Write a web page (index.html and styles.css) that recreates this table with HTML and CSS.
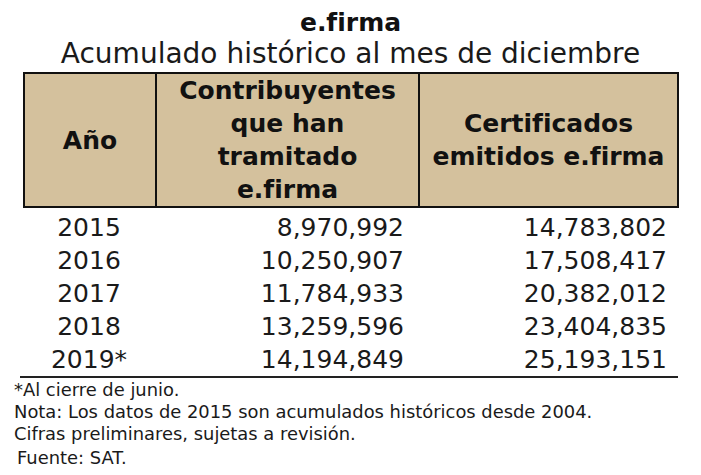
FILE: index.html
```html
<!DOCTYPE html>
<html lang="es">
<head>
<meta charset="utf-8">
<title>e.firma</title>
<link rel="stylesheet" href="styles.css">
</head>
<body>
  <h1 class="title">e.firma</h1>
  <p class="subtitle">Acumulado histórico al mes de diciembre</p>

  <div class="thead">
    <div class="th">Año</div>
    <div class="th">Contribuyentes<br>que han<br>tramitado<br>e.firma</div>
    <div class="th th-last">Certificados<br>emitidos e.firma</div>
  </div>

  <div class="tbody">
    <div class="td year">2015</div><div class="td num">8,970,992</div><div class="td num num-last">14,783,802</div>
    <div class="td year">2016</div><div class="td num">10,250,907</div><div class="td num num-last">17,508,417</div>
    <div class="td year">2017</div><div class="td num">11,784,933</div><div class="td num num-last">20,382,012</div>
    <div class="td year">2018</div><div class="td num">13,259,596</div><div class="td num num-last">23,404,835</div>
    <div class="td year">2019*</div><div class="td num">14,194,849</div><div class="td num num-last">25,193,151</div>
  </div>
  <div class="rule"></div>

  <div class="notes">
    <p class="note">*Al cierre de junio.</p>
    <p class="note">Nota: Los datos de 2015 son acumulados históricos desde 2004.</p>
    <p class="note">Cifras preliminares, sujetas a revisión.</p>
    <p class="note note-source">Fuente: SAT.</p>
  </div>
</body>
</html>
```

FILE: styles.css
```css
html, body {
  margin: 0;
  padding: 0;
  background: #ffffff;
}

body {
  width: 701px;
  height: 475px;
  overflow: hidden;
  font-family: "DejaVu Sans", "Open Sans", sans-serif;
  color: #111111;
}

.title {
  margin: 0;
  padding-top: 8px;
  font-size: 25px;
  line-height: 30px;
  font-weight: 700;
  text-align: center;
}

.subtitle {
  margin: 0;
  font-size: 28px;
  line-height: 32px;
  font-weight: 400;
  text-align: center;
  color: #1a1a1a;
}

.thead {
  display: grid;
  grid-template-columns: 132px 263px 261px;
  margin: 2px 0 0 23px;
}

.th {
  display: flex;
  align-items: center;
  justify-content: center;
  text-align: center;
  padding: 0 4px;
  min-height: 132px;
  background: #d4c19d;
  border-top: 2px solid #111111;
  border-bottom: 2px solid #111111;
  border-left: 2px solid #111111;
  font-size: 25px;
  line-height: 33px;
  font-weight: 700;
}

.th-last {
  border-right: 2px solid #111111;
}

.tbody {
  display: grid;
  grid-template-columns: 132px 263px 261px;
  grid-auto-rows: 33px;
  margin-left: 23px;
  padding-top: 3px;
}

.td {
  font-size: 25px;
  line-height: 33px;
  white-space: nowrap;
  color: #1a1a1a;
}

.year {
  text-align: center;
}

.num {
  text-align: right;
  padding-right: 14px;
}

.num-last {
  padding-right: 12px;
}

.rule {
  margin-left: 20px;
  width: 658px;
  border-top: 2px solid #222222;
}

.notes {
  margin-top: 1px;
  padding-left: 14px;
}

.note {
  margin: 0;
  font-size: 17.9px;
  line-height: 22px;
  color: #1a1a1a;
}

.note-source {
  margin-top: 2px;
  padding-left: 3px;
}
```
